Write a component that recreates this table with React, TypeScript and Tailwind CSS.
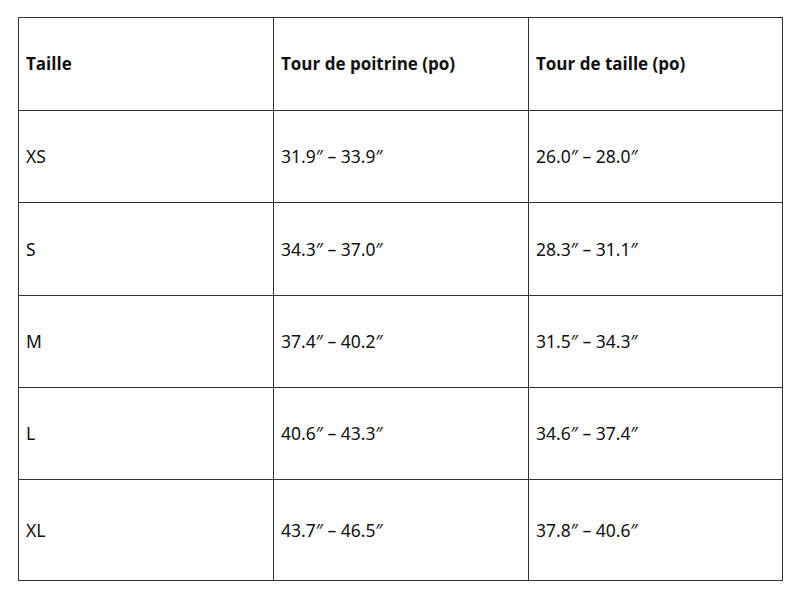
const rows = [
  { size: "XS", chest: "31.9″ – 33.9″", waist: "26.0″ – 28.0″", h: "h-[92px]" },
  { size: "S", chest: "34.3″ – 37.0″", waist: "28.3″ – 31.1″", h: "h-[93px]" },
  { size: "M", chest: "37.4″ – 40.2″", waist: "31.5″ – 34.3″", h: "h-[92px]" },
  { size: "L", chest: "40.6″ – 43.3″", waist: "34.6″ – 37.4″", h: "h-[92px]" },
  { size: "XL", chest: "43.7″ – 46.5″", waist: "37.8″ – 40.6″", h: "h-[101px]" },
];

export default function App() {
  return (
    <div className="w-[800px] h-[600px] bg-white pt-[17px] pl-[18px]">
      <table className="w-[765px] table-fixed border-collapse text-[#111]">
        <colgroup>
          <col className="w-[255px]" />
          <col className="w-[255px]" />
          <col className="w-[254px]" />
        </colgroup>
        <thead>
          <tr className="h-[93px]">
            {["Taille", "Tour de poitrine (po)", "Tour de taille (po)"].map((t) => (
              <th
                key={t}
                className="border border-[#333] px-[7px] text-left align-middle font-bold text-[17px] font-['Open_Sans',sans-serif]"
              >
                {t}
              </th>
            ))}
          </tr>
        </thead>
        <tbody>
          {rows.map((r) => (
            <tr key={r.size} className={r.h}>
              {[r.size, r.chest, r.waist].map((t, i) => (
                <td
                  key={i}
                  className="border border-[#333] px-[7px] align-middle text-[17.5px] font-['Noto_Sans',sans-serif]"
                >
                  {t}
                </td>
              ))}
            </tr>
          ))}
        </tbody>
      </table>
    </div>
  );
}
